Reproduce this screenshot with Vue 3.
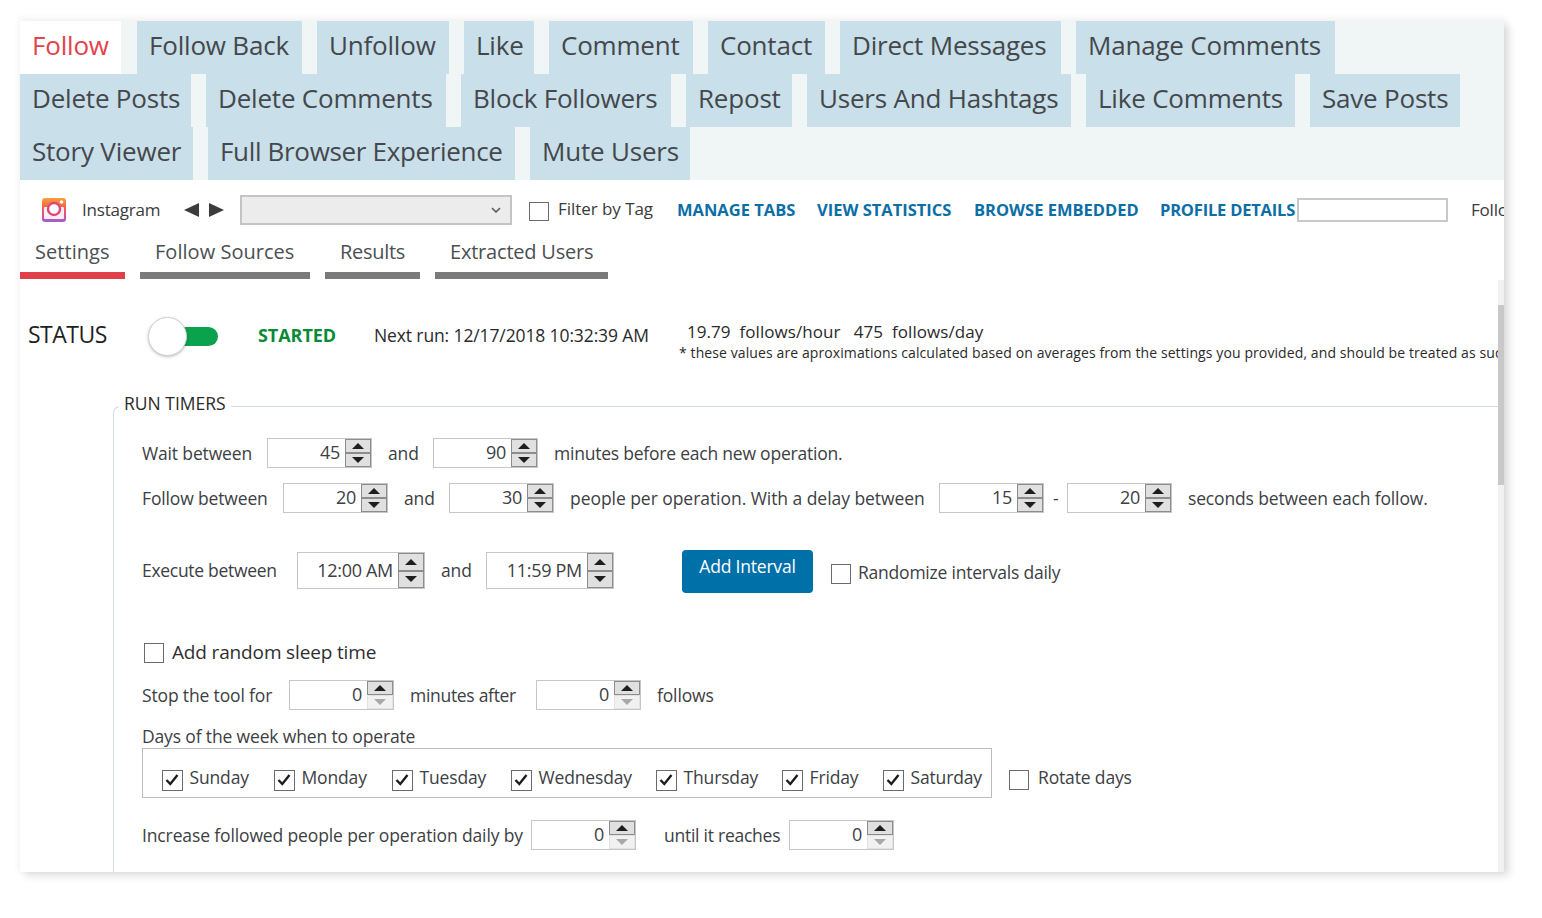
<script setup>
const tabRows = [
  [
    { label: 'Follow', w: 101, active: true },
    { label: 'Follow Back', w: 165, ml: 1 },
    { label: 'Unfollow', w: 132 },
    { label: 'Like', w: 70 },
    { label: 'Comment', w: 144 },
    { label: 'Contact', w: 117 },
    { label: 'Direct Messages', w: 221 },
    { label: 'Manage Comments', w: 259 },
  ],
  [
    { label: 'Delete Posts', w: 171 },
    { label: 'Delete Comments', w: 240 },
    { label: 'Block Followers', w: 210 },
    { label: 'Repost', w: 106 },
    { label: 'Users And Hashtags', w: 264 },
    { label: 'Like Comments', w: 209 },
    { label: 'Save Posts', w: 150 },
  ],
  [
    { label: 'Story Viewer', w: 173 },
    { label: 'Full Browser Experience', w: 307, ls: -0.33 },
    { label: 'Mute Users', w: 160 },
  ],
]
const subTabs = [
  { label: 'Settings', w: 105, active: true },
  { label: 'Follow Sources', w: 170, ls: 0.03 },
  { label: 'Results', w: 95, ls: -0.3 },
  { label: 'Extracted Users', w: 173, ls: -0.2 },
]
const links = [
  { label: 'MANAGE TABS', w: 118, ls: 0 },
  { label: 'VIEW STATISTICS', w: 135, ls: 0 },
  { label: 'BROWSE EMBEDDED', w: 164, ls: 0 },
  { label: 'PROFILE DETAILS', w: 134, ls: -0.2 },
]
const t = (v, w, gap = 15, ls = -0.15) => ({ type: 'text', v, w, gap, ls })
const s = (v, gap = 15, w = 105) => ({ type: 'spin', v, w, gap })
const d = (v, gap = 15) => ({ type: 'spin', v, w: 105, gap, disabled: true })
const timerRowA = [
  t('Wait between', 110, 0), s('45'), t('and', 29, 16), s('90', 16), t('minutes before each new operation.', 288, 16, -0.22),
]
const timerRowB = [
  t('Follow between', 126, 0), s('20'), t('and', 29, 16), s('30', 16), t('people per operation. With a delay between', 354, 16, -0.05),
  s('15', 15), t('-', 6, 9), s('20', 8), t('seconds between each follow.', 239, 16),
]
const sleepRow = [
  t('Stop the tool for', 132, 0), d('0'), t('minutes after', 106, 16, -0.3), d('0', 20), t('follows', 56, 16),
]
const increaseRow = [
  t('Increase followed people per operation daily by', 381, 0, -0.13), d('0', 8), t('until it reaches', 117, 28, -0.25), d('0', 8),
]
const days = [
  { label: 'Sunday', w: 59, gap: 0 },
  { label: 'Monday', w: 66, gap: 25 },
  { label: 'Tuesday', w: 67, gap: 24 },
  { label: 'Wednesday', w: 93, gap: 24 },
  { label: 'Thursday', w: 74, gap: 24 },
  { label: 'Friday', w: 49, gap: 24 },
  { label: 'Saturday', w: 71, gap: 24 },
]
</script>

<template>
  <div class="page">
    <div class="window">
      <div class="tabstrip">
        <div v-for="(row, i) in tabRows" :key="i" class="tabrow">
          <div
            v-for="tab in row"
            :key="tab.label"
            class="tab"
            :class="{ active: tab.active }"
            :style="{ width: tab.w + 'px', marginLeft: (tab.ml || 0) + 'px', letterSpacing: (tab.ls ?? -0.2) + 'px' }"
          >{{ tab.label }}</div>
        </div>
      </div>

      <div class="toolbar">
        <svg class="insta" width="26" height="26" viewBox="0 0 26 26">
          <defs>
            <linearGradient id="ig" x1="0" y1="0" x2="0" y2="1">
              <stop offset="0" stop-color="#f9a13a" />
              <stop offset="0.45" stop-color="#ef5a4e" />
              <stop offset="0.75" stop-color="#d84f9a" />
              <stop offset="1" stop-color="#9a63d6" />
            </linearGradient>
          </defs>
          <rect x="1" y="1" width="24" height="24" rx="3" fill="url(#ig)" />
          <rect x="3" y="10" width="20" height="12" rx="1" fill="#fbeef3" />
          <circle cx="13" cy="12" r="6" fill="#fff" stroke="#e0457a" stroke-width="2.4" />
          <circle cx="20.5" cy="5" r="1.8" fill="#fff" />
        </svg>
        <span class="insta-label">Instagram</span>
        <span class="arrows">
          <svg width="15" height="14" viewBox="0 0 15 14"><path d="M0 7 15 0V14Z" fill="#3c3c3c" /></svg>
          <svg width="15" height="14" viewBox="0 0 15 14"><path d="M15 7 0 0V14Z" fill="#3c3c3c" /></svg>
        </span>
        <div class="select">
          <svg width="10" height="6" viewBox="0 0 10 6"><path d="M1 1 5 5 9 1" fill="none" stroke="#555" stroke-width="1.5" /></svg>
        </div>
        <span class="check filter-check"></span>
        <span class="filter-label">Filter by Tag</span>
        <span
          v-for="link in links"
          :key="link.label"
          class="link"
          :style="{ width: link.w + 'px', letterSpacing: link.ls + 'px' }"
        >{{ link.label }}</span>
        <span class="search"></span>
        <span class="clip-text">Follow</span>
      </div>

      <div class="subtabs">
        <div
          v-for="tab in subTabs"
          :key="tab.label"
          class="subtab"
          :class="{ active: tab.active }"
          :style="{ width: tab.w + 'px', letterSpacing: (tab.ls ?? 0.05) + 'px' }"
        >{{ tab.label }}</div>
      </div>

      <div class="scrollbar"><div class="thumb"></div></div>

      <div class="status">
        <span class="status-title">STATUS</span>
        <span class="toggle"><span class="knob"></span></span>
        <span class="started">STARTED</span>
        <span class="next">Next run: 12/17/2018 10:32:39 AM</span>
        <div class="stats">
          <div class="stats-main">19.79&nbsp;&nbsp;follows/hour&nbsp;&nbsp;&nbsp;475&nbsp;&nbsp;follows/day</div>
          <div class="stats-note">* these values are aproximations calculated based on averages from the settings you provided, and should be treated as such</div>
        </div>
      </div>

      <fieldset class="timers">
        <legend>RUN TIMERS</legend>

        <div class="row row-a">
          <template v-for="(it, i) in timerRowA" :key="i">
            <span v-if="it.type === 'text'" class="txt" :style="{ width: it.w + 'px', marginLeft: it.gap + 'px', letterSpacing: it.ls + 'px' }">{{ it.v }}</span>
            <span v-else class="spin" :style="{ width: it.w + 'px', marginLeft: it.gap + 'px' }">
              <span class="spin-val">{{ it.v }}</span>
              <span class="spin-btns">
                <span class="btn"><i class="up"></i></span>
                <span class="btn"><i class="down"></i></span>
              </span>
            </span>
          </template>
        </div>

        <div class="row row-b">
          <template v-for="(it, i) in timerRowB" :key="i">
            <span v-if="it.type === 'text'" class="txt" :style="{ width: it.w + 'px', marginLeft: it.gap + 'px', letterSpacing: it.ls + 'px' }">{{ it.v }}</span>
            <span v-else class="spin" :style="{ width: it.w + 'px', marginLeft: it.gap + 'px' }">
              <span class="spin-val">{{ it.v }}</span>
              <span class="spin-btns">
                <span class="btn"><i class="up"></i></span>
                <span class="btn"><i class="down"></i></span>
              </span>
            </span>
          </template>
        </div>

        <div class="row row-c">
          <span class="txt exec">Execute between</span>
          <span class="spin time first-time">
            <span class="spin-val">12:00 AM</span>
            <span class="spin-btns">
              <span class="btn"><i class="up"></i></span>
              <span class="btn"><i class="down"></i></span>
            </span>
          </span>
          <span class="txt and2">and</span>
          <span class="spin time">
            <span class="spin-val">11:59 PM</span>
            <span class="spin-btns">
              <span class="btn"><i class="up"></i></span>
              <span class="btn"><i class="down"></i></span>
            </span>
          </span>
          <span class="add-btn">Add Interval</span>
          <span class="check rand-check"></span>
          <span class="txt rand">Randomize intervals daily</span>
        </div>

        <div class="row row-d">
          <span class="check sleep-check"></span>
          <span class="sleep">Add random sleep time</span>
        </div>

        <div class="row row-e">
          <template v-for="(it, i) in sleepRow" :key="i">
            <span v-if="it.type === 'text'" class="txt" :style="{ width: it.w + 'px', marginLeft: it.gap + 'px', letterSpacing: it.ls + 'px' }">{{ it.v }}</span>
            <span v-else class="spin" :style="{ width: it.w + 'px', marginLeft: it.gap + 'px' }">
              <span class="spin-val">{{ it.v }}</span>
              <span class="spin-btns">
                <span class="btn"><i class="up"></i></span>
                <span class="btn off"><i class="down"></i></span>
              </span>
            </span>
          </template>
        </div>

        <div class="days-label txt">Days of the week when to operate</div>

        <div class="days-line">
          <div class="days-box">
            <label v-for="day in days" :key="day.label" class="day" :style="{ marginLeft: day.gap + 'px' }">
              <span class="check on">
                <svg width="16" height="16" viewBox="0 0 16 16"><path d="M2.5 8 6.3 12 13.5 3" fill="none" stroke="#1c1c1c" stroke-width="2.4" /></svg>
              </span>
              <span class="txt day-txt" :style="{ width: day.w + 'px' }">{{ day.label }}</span>
            </label>
          </div>
          <span class="check rotate-check"></span>
          <span class="txt rotate">Rotate days</span>
        </div>

        <div class="row row-f">
          <template v-for="(it, i) in increaseRow" :key="i">
            <span v-if="it.type === 'text'" class="txt" :style="{ width: it.w + 'px', marginLeft: it.gap + 'px', letterSpacing: it.ls + 'px' }">{{ it.v }}</span>
            <span v-else class="spin" :style="{ width: it.w + 'px', marginLeft: it.gap + 'px' }">
              <span class="spin-val">{{ it.v }}</span>
              <span class="spin-btns">
                <span class="btn"><i class="up"></i></span>
                <span class="btn off"><i class="down"></i></span>
              </span>
            </span>
          </template>
        </div>
      </fieldset>
    </div>
  </div>
</template>

<style>
html, body { background: #fff; overflow: hidden; }
</style>

<style scoped>
.page {
  width: 1542px;
  height: 918px;
  padding: 21px 0 0 20px;
  box-sizing: border-box;
  background: #fff;
  font-family: "Open Sans", "Noto Sans", sans-serif;
  color: #3a3a3a;
}
.window {
  position: relative;
  width: 1484px;
  height: 851px;
  background: #fff;
  overflow: hidden;
  box-shadow: 0 -2px 6px 2px rgba(0, 0, 0, 0.04), 5px 4px 8px rgba(0, 0, 0, 0.12);
}
.tabstrip { background: #f0f5f5; height: 159px; }
.tabrow { display: flex; gap: 15px; height: 53px; }
.tab {
  box-sizing: border-box;
  height: 53px;
  line-height: 48px;
  padding-left: 12px;
  background: #c9dfe9;
  font-size: 26px;
  white-space: nowrap;
  color: #44484c;
}
.tab.active { background: #fff; color: #e2434c; }

.toolbar { box-sizing: border-box; display: flex; align-items: center; height: 50px; padding-top: 10px; white-space: nowrap; }
.toolbar > * { flex: none; }
.insta { margin-left: 21px; }
.insta-label { margin: -2px 0 0 15px; width: 80px; font-size: 17px; letter-spacing: -0.2px; color: #3a3a3a; }
.arrows { display: flex; gap: 10px; margin-left: 22px; }
.select {
  box-sizing: border-box;
  display: flex;
  align-items: center;
  justify-content: flex-end;
  margin-left: 16px;
  width: 272px;
  height: 30px;
  padding-right: 9px;
  background: #ececec;
  border: 2px solid #c4c4c4;
}
.check {
  box-sizing: border-box;
  display: inline-flex;
  align-items: center;
  justify-content: center;
  flex: none;
  width: 20px;
  height: 20px;
  background: #fff;
  border: 1.5px solid #6b6b6b;
}
.filter-check { margin-left: 17px; margin-top: 2px; height: 19px; }
.filter-label { margin-left: 9px; width: 96px; font-size: 17px; letter-spacing: -0.05px; margin-top: -4px; }
.link {
  display: inline-block;
  margin: -2px 0 0 23px;
  font-size: 16.5px;
  font-weight: 700;
  color: #0b6ea6;
}
.link + .link { margin-left: 22px; }
.search {
  box-sizing: border-box;
  margin-left: 3px;
  width: 151px;
  height: 24px;
  border: 2px solid #c9c9c9;
  background: #fff;
}
.clip-text { margin: -2px 0 0 23px; font-size: 17px; letter-spacing: -0.2px; }

.subtabs { display: flex; gap: 15px; height: 49px; }
.subtab {
  box-sizing: border-box;
  height: 49px;
  line-height: 44px;
  padding-left: 15px;
  font-size: 20px;
  color: #4b4f52;
  white-space: nowrap;
  border-bottom: 7px solid #7a7a7a;
}
.subtab.active { border-bottom-color: #e0404a; }

.scrollbar {
  position: absolute;
  top: 259px;
  right: 0;
  bottom: 0;
  width: 6px;
  background: #f1f1f1;
}
.thumb { margin-top: 25px; height: 180px; background: #c8c8c8; }

.status { display: flex; height: 114px; white-space: nowrap; color: #2a2a2a; }
.status-title { margin: 38px 0 0 8px; width: 80px; font-size: 23px; line-height: 34px; letter-spacing: -0.5px; color: #1f1f1f; }
.toggle { position: relative; margin: 48px 0 0 39px; width: 71px; height: 19px; flex: none; }
.toggle::before {
  content: "";
  position: absolute;
  left: 20px;
  right: 0;
  top: 0;
  bottom: 0;
  background: #0ba24e;
  border-radius: 0 10px 10px 0;
}
.knob {
  position: absolute;
  left: 1px;
  top: -10px;
  width: 37px;
  height: 37px;
  border-radius: 50%;
  background: #fff;
  border: 1px solid #d4d0d0;
  box-shadow: 0 1px 3px rgba(0, 0, 0, 0.25);
}
.started { margin: 44px 0 0 40px; width: 78px; font-size: 18px; line-height: 24px; font-weight: 700; letter-spacing: -0.05px; color: #0a8a36; }
.next { margin: 44px 0 0 38px; width: 274px; font-size: 17.5px; line-height: 24px; letter-spacing: -0.12px; }
.stats { margin: 41px 0 0 31px; width: 819px; overflow: hidden; flex: none; }
.stats-main { margin-left: 8px; font-size: 17px; line-height: 24px; letter-spacing: 0.05px; }
.stats-note { font-size: 14px; line-height: 16px; margin-top: 1px; letter-spacing: 0.1px; }

.timers {
  margin: 0 6px 0 93px;
  padding: 0;
  height: 600px;
  border: none;
  border-top: 1px solid #cfdde9;
  border-left: 1px solid #cfdde9;
  border-top-left-radius: 7px;
  min-width: 0;
}
.timers legend {
  margin-left: 5px;
  padding: 0 5px 6px;
  font-size: 17.5px;
  line-height: 20px;
  letter-spacing: 0;
  color: #2a2a2a;
}
.row { display: flex; align-items: center; margin-left: 28px; white-space: nowrap; }
.txt { display: inline-block; font-size: 17.5px; letter-spacing: -0.15px; color: #3c4043; white-space: nowrap; flex: none; }
.row-a { margin-top: 19px; height: 30px; }
.row-b { margin-top: 15px; height: 30px; }
.row-c { margin-top: 36px; height: 43px; }
.row-d { margin-top: 48px; height: 24px; margin-left: 30px; }
.row-e { margin-top: 16px; height: 30px; }
.row-f { margin-top: 22px; height: 30px; }

.spin {
  box-sizing: border-box;
  display: inline-flex;
  flex: none;
  height: 30px;
  background: #fff;
  border: 1.5px solid #c6c6c6;
}
.spin-val { flex: 1; text-align: right; padding-right: 5px; font-size: 18px; line-height: 27px; letter-spacing: -0.3px; color: #3c4043; }
.spin-btns { display: flex; flex-direction: column; width: 26px; flex: none; background: #e2e2e2; }
.btn {
  box-sizing: border-box;
  flex: 1;
  display: flex;
  align-items: center;
  justify-content: center;
  background: #e0e0e0;
  border: 1.5px solid #8c8c8c;
}
.btn.off { background: #f1f1f1; border-color: #e2e2e2; }
.btn i { display: block; width: 0; height: 0; border-left: 6px solid transparent; border-right: 6px solid transparent; }
.btn .up { border-bottom: 6px solid #1e1e1e; }
.btn .down { border-top: 6px solid #1e1e1e; }
.btn.off .down { border-top-color: #a8a8a8; }

.exec { width: 135px; margin-bottom: 2px; letter-spacing: -0.3px; }
.spin.time { width: 128px; height: 37px; }
.spin.time .spin-val { line-height: 34px; }
.spin.time .spin-btns { width: 26px; }
.first-time { margin-left: 20px; }
.and2 { width: 29px; margin: 0 16px 2px 16px; }
.add-btn {
  box-sizing: border-box;
  flex: none;
  margin: 2px 0 0 68px;
  width: 131px;
  height: 43px;
  line-height: 32px;
  text-align: center;
  background: #0070a9;
  border-radius: 4px;
  color: #fff;
  font-size: 17.5px;
  letter-spacing: -0.2px;
}
.rand-check { margin-left: 18px; margin-top: 6px; }
.rand { margin-left: 7px; margin-top: 2px; letter-spacing: -0.22px; }
.sleep-check { margin-top: 2px; }
.sleep { margin-left: 8px; font-size: 19px; letter-spacing: -0.15px; color: #2f2f2f; }

.days-label { display: block; margin: 14px 0 0 28px; line-height: 24px; }
.days-line { display: flex; align-items: center; margin: 0 0 0 28px; }
.days-box {
  box-sizing: border-box;
  display: flex;
  width: 850px;
  height: 50px;
  padding: 18.5px 0 0 18.5px;
  border: 1.5px solid #bcbcbc;
}
.day { display: flex; align-items: flex-start; height: 22px; }
.check.on { margin-top: 2px; width: 21px; height: 21px; }
.day-txt { margin-left: 7px; margin-top: -1px; line-height: 20px; }
.rotate-check { margin-left: 17px; margin-top: 13px; }
.rotate { margin-left: 9px; margin-top: 8px; }
</style>
